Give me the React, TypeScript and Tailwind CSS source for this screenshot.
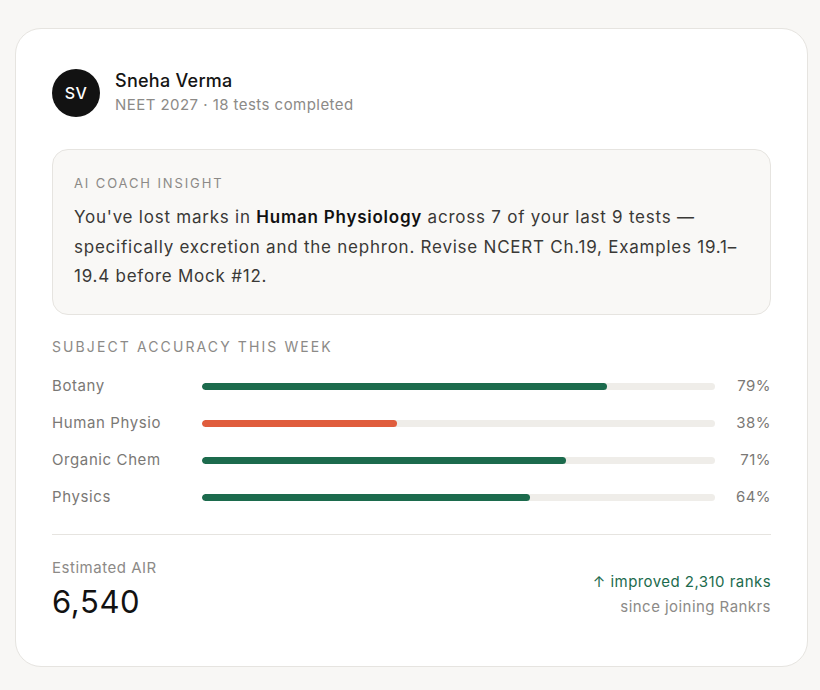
import React from 'react';

interface Subject {
  name: string;
  pct: number;
  weak?: boolean;
}

const subjects: Subject[] = [
  { name: 'Botany', pct: 79 },
  { name: 'Human Physio', pct: 38, weak: true },
  { name: 'Organic Chem', pct: 71 },
  { name: 'Physics', pct: 64 },
];

const SubjectRow: React.FC<{ subject: Subject }> = ({ subject }) => (
  <div className="flex items-center h-[37px]">
    <div className="w-[150px] text-[15px] tracking-[0.04em] text-[#7a7875]">{subject.name}</div>
    <div className="flex-1 h-[7px] rounded-full bg-[#efede9] overflow-hidden">
      <div
        className={`h-full rounded-full ${subject.weak ? 'bg-[#e05d3d]' : 'bg-[#1c6b4d]'}`}
        style={{ width: `${subject.pct}%` }}
      />
    </div>
    <div className="w-[56px] text-right text-[15px] tracking-[0.03em] text-[#7a7875]">{subject.pct}%</div>
  </div>
);

export default function App() {
  return (
    <div
      className="min-h-screen bg-[#f8f7f5] pt-[28px] pl-[15px]"
      style={{ fontFamily: '"Inter", "Noto Sans", sans-serif' }}
    >
      <div className="w-[793px] h-[639px] bg-white border border-[#e6e4e0] rounded-[26px] px-[36px] pt-[40px]">
        <header className="flex items-center gap-[15px]">
          <div className="w-[48px] h-[48px] rounded-full bg-[#121212] flex items-center justify-center text-white text-[16px] font-medium tracking-[0.02em]">
            SV
          </div>
          <div>
            <h2 className="text-[18px] font-medium tracking-[0.015em] text-[#141414] leading-[24px]">Sneha Verma</h2>
            <p className="text-[15px] tracking-[0.03em] text-[#8c8a87] leading-[24px]">NEET 2027 · 18 tests completed</p>
          </div>
        </header>

        <section className="mt-[32px] bg-[#f9f8f6] border border-[#e6e4e0] rounded-[16px] pl-[21px] pr-[14px] pt-[23px] pb-[22px]">
          <div className="text-[13px] tracking-[0.145em] text-[#8c8a87] leading-[20px]">AI COACH INSIGHT</div>
          <p className="mt-[10px] text-[17px] tracking-[0.045em] leading-[29.5px] text-[#3a3936]">
            You've lost marks in <strong className="font-semibold text-[#111]">Human Physiology</strong> across 7 of your last 9 tests — specifically excretion and the nephron. Revise NCERT Ch.19, Examples 19.1–19.4 before Mock #12.
          </p>
        </section>

        <section className="mt-[22px]">
          <div className="text-[14px] tracking-[0.15em] text-[#8c8a87] leading-[20px]">SUBJECT ACCURACY THIS WEEK</div>
          <div className="mt-[11px]">
            {subjects.map(s => (
              <SubjectRow key={s.name} subject={s} />
            ))}
          </div>
        </section>

        <div className="mt-[18px] border-t border-[#e6e4e0]" />

        <footer className="flex items-start justify-between pt-[22px]">
          <div>
            <div className="text-[15px] tracking-[0.035em] text-[#8c8a87] leading-[22px]">Estimated AIR</div>
            <div className="mt-[3px] text-[31px] tracking-[0.02em] text-[#121212] leading-[40px]">6,540</div>
          </div>
          <div className="mt-[12px] text-right">
            <div className="text-[15px] tracking-[0.03em] text-[#1c6b4d] leading-[25px]">↑ improved 2,310 ranks</div>
            <div className="text-[15px] tracking-[0.03em] text-[#8c8a87] leading-[25px]">since joining Rankrs</div>
          </div>
        </footer>
      </div>
    </div>
  );
}
